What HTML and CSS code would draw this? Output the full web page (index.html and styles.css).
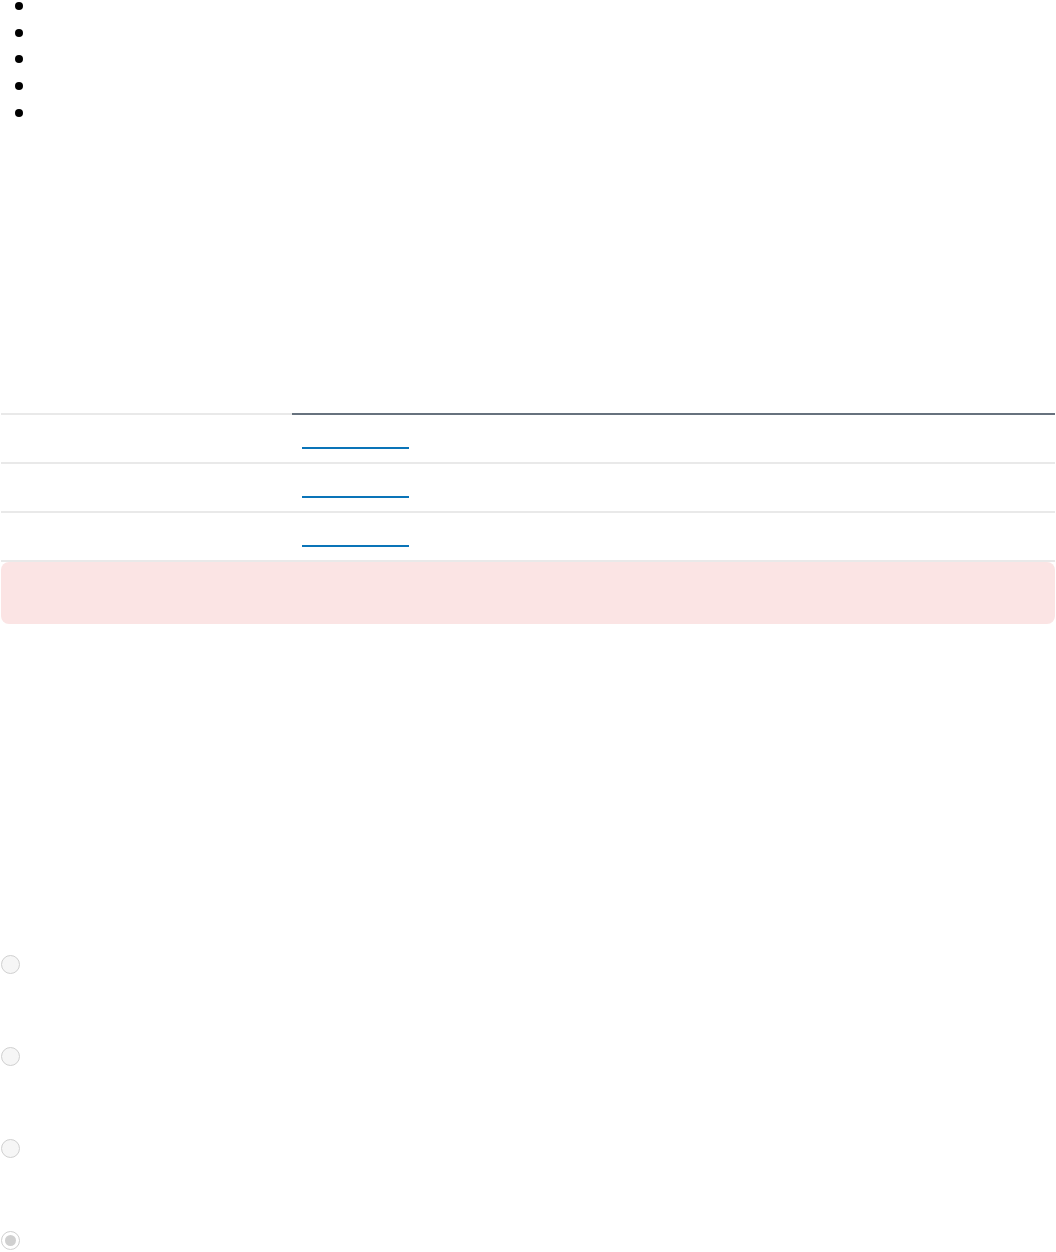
FILE: index.html
```html
<!DOCTYPE html>
<html lang="en">
<head>
<meta charset="utf-8">
<title>Page</title>
<link rel="stylesheet" href="styles.css">
</head>
<body>
<ul class="list">
  <li>&nbsp;</li>
  <li>&nbsp;</li>
  <li>&nbsp;</li>
  <li>&nbsp;</li>
  <li>&nbsp;</li>
</ul>

<div class="table">
  <div class="thead">
    <div class="th th-light"></div>
    <div class="th th-dark"></div>
  </div>
  <div class="row">
    <div class="cell"></div>
    <div class="cell cell-link"><a class="link" href="#"></a></div>
  </div>
  <div class="row">
    <div class="cell"></div>
    <div class="cell cell-link"><a class="link" href="#"></a></div>
  </div>
  <div class="row">
    <div class="cell"></div>
    <div class="cell cell-link"><a class="link" href="#"></a></div>
  </div>
</div>
<div class="alert"></div>

<div class="radios">
  <span class="radio"></span>
  <span class="radio"></span>
  <span class="radio"></span>
  <span class="radio radio-checked"></span>
</div>
</body>
</html>
```
FILE: styles.css
```css
html, body {
  margin: 0;
  padding: 0;
  background: #ffffff;
  font-family: "Liberation Sans", Arial, sans-serif;
}

.list {
  margin: -9px 0 0 0;
  padding-left: 37px;
  font-size: 25px;
  line-height: 26.67px;
  color: #000;
}

.table {
  margin: 289px 1px 0 1px;
}

.thead {
  display: grid;
  grid-template-columns: 291px 1fr;
}

.th {
  height: 0;
  border-bottom: 2px solid #e9e9e9;
}

.th-dark {
  border-bottom-color: #67727e;
}

.row {
  display: grid;
  grid-template-columns: 291px 1fr;
  height: 47px;
  border-bottom: 2px solid #e9e9e9;
}

.cell-link {
  padding: 32px 0 0 10px;
}

.link {
  display: block;
  width: 107px;
  height: 2px;
  background: #0a74b8;
}

.alert {
  margin: 0 1px;
  height: 62px;
  background: #fbe4e4;
  border-radius: 8px;
}

.radios {
  display: flex;
  flex-direction: column;
  gap: 73px;
  margin: 331px 0 0 1px;
}

.radio {
  box-sizing: border-box;
  width: 19px;
  height: 19px;
  border: 1.5px solid #d0d0d0;
  border-radius: 50%;
  background: #f6f6f6;
  display: flex;
  align-items: center;
  justify-content: center;
}

.radio-checked {
  background: #ffffff;
}

.radio-checked::after {
  content: "";
  width: 11px;
  height: 11px;
  border-radius: 50%;
  background: #d0d0d0;
}
```
